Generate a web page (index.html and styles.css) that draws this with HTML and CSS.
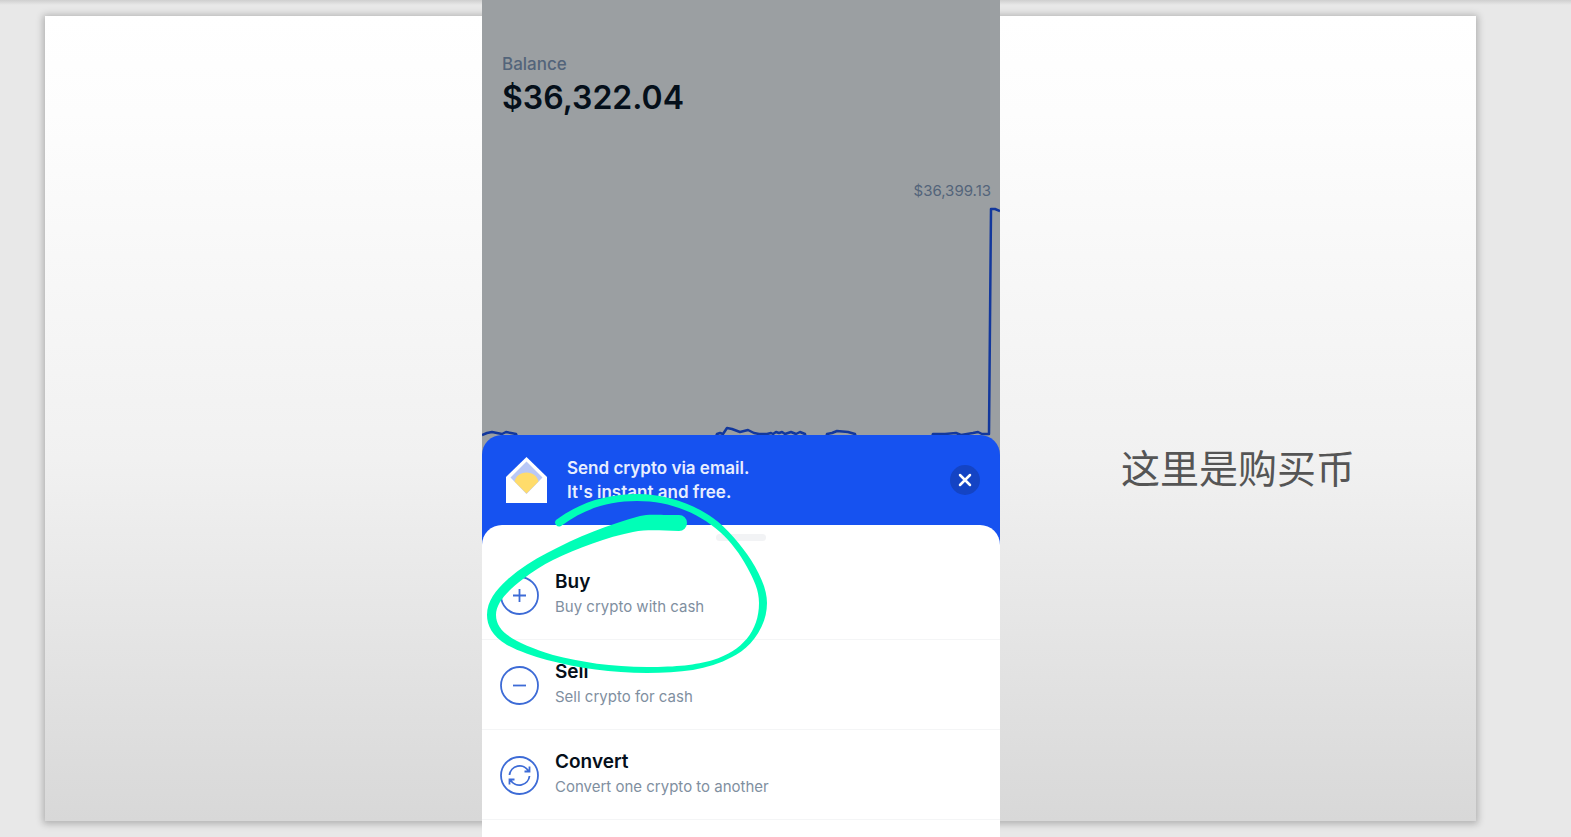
FILE: index.html
```html
<!DOCTYPE html>
<html lang="zh-CN">
<head>
<meta charset="utf-8">
<meta name="viewport" content="width=device-width, initial-scale=1">
<title>这里是购买币</title>
<link rel="stylesheet" href="styles.css">
</head>
<body>
<main class="viewer">
  <div class="slide"></div>
  <section class="phone" lang="en">
    <div class="dashboard">
      <div class="balance">
        <p class="balance-label">Balance</p>
        <p class="balance-value">$36,322.04</p>
      </div>
      <p class="chart-peak">$36,399.13</p>
      <svg class="chart" viewBox="0 0 518 255" aria-hidden="true">
        <path d="M0 234 L5 232 L10 231 L15 232 L20 233 L24 231 L29 232 L34 233 L40 250 L228 250 L235 233 L238 232 L241 233 L245 227 L250 228 L258 231 L266 229 L272 232 L277 233 L285 233 L289 232 L291 233 L294 231 L297 232 L300 231 L303 233 L309 231 L314 233 L318 231 L323 233 L326 250 L340 250 L345 233 L350 232 L355 230 L366 231 L373 233 L378 250 L445 250 L451 233 L463 233 L474 232 L479 234 L491 232 L496 231 L500 233 L507 233 L509 8 L513 8 L518 10"/>
      </svg>
    </div>
    <div class="sheet">
      <div class="banner">
        <svg class="envelope" viewBox="0 0 41 46" aria-hidden="true">
          <path fill="#fff" d="M0 20 L20.500 0 L41 20 V46 H0Z"/>
          <path fill="#b9c8f6" d="M4.500 20.500 L20.500 4.500 L36.500 20.500 L20.500 37Z"/>
          <path fill="#ffdc6b" d="M8.500 24.500 C10 19 14 15.500 20.500 15.500 C27 15.500 31 19 32.500 24.500 L20.500 36.500Z"/>
        </svg>
        <p class="banner-text">Send crypto via email.<br>It's instant and free.</p>
        <button class="close" type="button" aria-label="Close">
          <svg viewBox="0 0 30 30" aria-hidden="true"><path d="M10 10 L20 20 M20 10 L10 20"/></svg>
        </button>
      </div>
      <div class="panel">
        <div class="handle"></div>
        <button class="action" type="button">
          <svg class="action-icon" viewBox="0 0 39 39" aria-hidden="true"><circle cx="19.500" cy="19.500" r="18.500"/><path d="M13 19.500 H26 M19.500 13 V26"/></svg>
          <span class="action-text"><span class="action-title">Buy</span><span class="action-note">Buy crypto with cash</span></span>
        </button>
        <button class="action" type="button">
          <svg class="action-icon" viewBox="0 0 39 39" aria-hidden="true"><circle cx="19.500" cy="19.500" r="18.500"/><path d="M13 19.500 H26"/></svg>
          <span class="action-text"><span class="action-title">Sell</span><span class="action-note">Sell crypto for cash</span></span>
        </button>
        <button class="action" type="button">
          <svg class="action-icon" viewBox="0 0 39 39" aria-hidden="true"><circle cx="19.500" cy="19.500" r="18.500"/><path d="M9.500 19 A10.200 10.200 0 0 1 28.500 15 M29.500 10.500 V15.500 H24.500 M29.500 20 A10.200 10.200 0 0 1 10.500 24 M9.500 28.500 V23.500 H14.500"/></svg>
          <span class="action-text"><span class="action-title">Convert</span><span class="action-note">Convert one crypto to another</span></span>
        </button>
      </div>
    </div>
    <svg class="marker" viewBox="482 485 300 200" aria-hidden="true">
      <path d="M556 520 C580 502 608 494 637 494 C667 494 693 504 713 518 C727 528 742 546 751 560 C761 576 767 590 767 603 C767 629 748 650 732 657 C708 670 680 673 647 673 C612 673 578 668 547 660 C533 656 518 651 507 645 C492 636 487 625 487 615 C487 601 496 590 507 580 C519 569 533 560 547 553 C577 537 610 524 640 516 C648 514 655 515 679 515 A8 8 0 0 1 679 531 C662 531 650 529 633 532 C607 537 578 548 553 560 C543 565 532 572 523 579 C507 591 496 603 496 615 C496 634 519 644 553 655 C580 662 612 667 647 667 C678 667 695 665 713 660 C742 651 759 631 759 603 C759 590 754 580 747 567 C740 554 731 542 720 532 C699 513 670 501 637 501 C608 501 584 509 561 526 A4 4 0 0 1 556 520Z"/>
    </svg>
  </section>
  <p class="caption">这里是购买币</p>
</main>
</body>
</html>
```
FILE: styles.css
```css
* {
  box-sizing: border-box;
}

body,
p {
  margin: 0;
}

body {
  background: #e8e8e8;
  font-family: Inter, "Liberation Sans", sans-serif;
}

button {
  padding: 0;
  border: 0;
  background: none;
  color: inherit;
  font: inherit;
  text-align: left;
}

.viewer {
  display: grid;
  grid-template-columns: 45px 437fr 518px 476fr 95px;
  grid-template-rows: 16px 1fr 16px;
  height: 100vh;
  overflow: hidden;
  background: linear-gradient(#cfcfcf, #e8e8e8 5px);
}

.slide {
  grid-column: 2 / 5;
  grid-row: 2;
  background: linear-gradient(#fff 0%, #fdfdfd 12%, #f1f1f1 55%, #d8d8d8 100%);
  box-shadow: 0 1px 7px 2px rgba(0, 0, 0, 0.24);
}

.phone {
  position: relative;
  grid-column: 3;
  grid-row: 1 / 4;
  display: flex;
  flex-direction: column;
  overflow: hidden;
  background: #9b9fa2;
}

.dashboard {
  padding-top: 52px;
}

.balance {
  padding: 0 20px;
}

.balance-label {
  color: #53647a;
  font-size: 17px;
  font-weight: 500;
  line-height: 24px;
}

.balance-value {
  color: #050f1a;
  font-size: 32px;
  font-weight: 600;
  line-height: 44px;
}

.chart-peak {
  padding: 61px 9px 0 0;
  color: #53647a;
  font-size: 15px;
  line-height: 20px;
  text-align: right;
}

.chart {
  display: block;
  width: 100%;
}

.chart path {
  fill: none;
  stroke: #12379c;
  stroke-width: 2.5;
  stroke-linejoin: round;
}

.sheet {
  position: relative;
  display: flex;
  flex: 1;
  flex-direction: column;
  margin-top: -21px;
  border-radius: 20px 20px 0 0;
  background: #1652f0;
}

.banner {
  display: flex;
  align-items: center;
  height: 90px;
  padding: 0 20px 0 24px;
}

.envelope {
  width: 41px;
  height: 46px;
}

.banner-text {
  flex: 1;
  margin-left: 20px;
  color: #e8eefe;
  font-size: 17px;
  font-weight: 600;
  line-height: 24px;
}

.close {
  width: 30px;
  height: 30px;
  border-radius: 50%;
  background: #1444c4;
}

.close svg {
  display: block;
  fill: none;
  stroke: #fff;
  stroke-width: 2.5;
  stroke-linecap: round;
}

.panel {
  display: flex;
  flex: 1;
  flex-direction: column;
  border-radius: 20px 20px 0 0;
  background: #fff;
}

.handle {
  align-self: center;
  width: 50px;
  height: 7px;
  margin: 9px 0;
  border-radius: 4px;
  background: #f2f3f5;
}

.action {
  display: flex;
  align-items: center;
  gap: 16px;
  height: 90px;
  padding: 2px 18px 0;
  border-bottom: 1px solid #f4f5f6;
}

.action-icon {
  width: 39px;
  height: 39px;
  fill: none;
  stroke: #3d6bd6;
  stroke-width: 1.8;
}

.action-text {
  display: flex;
  flex-direction: column;
  padding-bottom: 4px;
}

.action-title {
  color: #050f1a;
  font-size: 19px;
  font-weight: 600;
  line-height: 26px;
}

.action-note {
  color: #7f8f9f;
  font-size: 15px;
  line-height: 24px;
}

.marker {
  position: absolute;
  top: 485px;
  left: 0;
  width: 300px;
  height: 200px;
  fill: #00ffb7;
}

.caption {
  grid-column: 4;
  grid-row: 2;
  place-self: center;
  padding-top: 94px;
  color: #555;
  font-family: "Noto Sans CJK SC", sans-serif;
  font-size: 39px;
  font-weight: 400;
  line-height: 56px;
}
```
